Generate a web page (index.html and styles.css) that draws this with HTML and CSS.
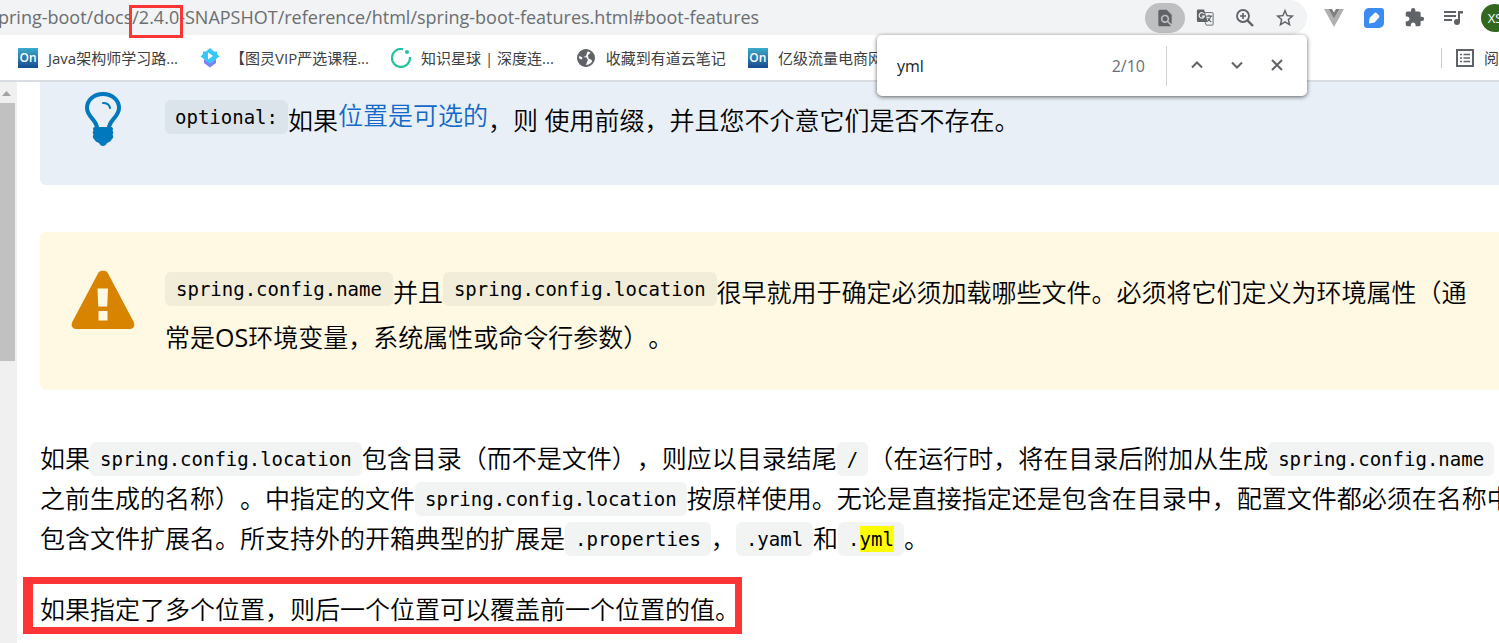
FILE: index.html
```
<!DOCTYPE html>
<html lang="zh-CN">
<head>
<meta charset="utf-8">
<title>Spring Boot Features</title>
<link rel="stylesheet" href="styles.css">
</head>
<body>
<header class="toolbar">
  <div class="omnibox">
    <input class="url" type="text" aria-label="地址" value="pring-boot/docs/2.4.0-SNAPSHOT/reference/html/spring-boot-features.html#boot-features">
    <button class="tool tool-active" aria-label="查找"><svg width="20" height="20" viewBox="0 0 24 24"><path fill="#5f6368" d="M20 19.6V8l-6-6H6c-1.100 0-2 .9-2 2v16c0 1.100.9 2 2 2h12c.45 0 .85-.15 1.200-.4l-4.430-4.430A4.970 4.970 0 0 1 7 13a5 5 0 1 1 9.170 2.750L20 19.600zM9 13a3 3 0 1 0 6 0 3 3 0 0 0-6 0z"/></svg></button>
    <button class="tool" aria-label="翻译"><svg width="18" height="19" viewBox="0 0 20 20"><path fill="#5f6368" d="M2 1h7l4 14H2.500A1.500 1.500 0 0 1 1 13.500V2.500A1.500 1.500 0 0 1 2 1z"/><path fill="none" stroke="#5f6368" stroke-width="1" d="M10 4.500h8a1 1 0 0 1 1 1v12a1 1 0 0 1-1 1h-6.500L10 15"/><path fill="none" stroke="#f1f3f4" stroke-width="1.300" d="M9 6a3 3 0 1 0 .4 2.500H6.500"/><path fill="none" stroke="#5f6368" stroke-width="1.200" d="M11.500 8.500H18M14.500 7v1.500M16.500 8.500c-.5 3-2 4.500-4 6M13 10.500c1 2 2.500 3.500 4 4.500"/></svg></button>
    <button class="tool" aria-label="缩放"><svg width="20" height="20" viewBox="0 0 20 20"><g fill="none" stroke="#5f6368"><circle cx="8" cy="8" r="6" stroke-width="1.800"/><path stroke-width="2.400" d="M12.400 12.400l5.600 5.600"/><path stroke-width="1.600" d="M5 8h6M8 5v6"/></g></svg></button>
    <button class="tool" aria-label="收藏"><svg width="22" height="22" viewBox="0 0 24 24"><path fill="#5f6368" d="M22 9.240l-7.190-.62L12 2 9.190 8.630 2 9.240l5.460 4.730L5.820 21 12 17.270 18.180 21l-1.630-7.030L22 9.240zM12 15.400l-3.760 2.270 1-4.280-3.320-2.880 4.380-.38L12 6.100l1.710 4.040 4.380.38-3.320 2.880 1 4.280L12 15.400z"/></svg></button>
  </div>
  <div class="extensions">
    <button class="tool" aria-label="Vue"><svg width="20" height="18" viewBox="0 0 20 18"><path fill="#b0b0b0" d="M0 0h4.500L10 9.500 15.500 0H20L10 18z"/><path fill="#7d7d7d" d="M4.500 0H8l2 3.500L12 0h3.500L10 9.500z"/></svg></button>
    <button class="tool" aria-label="笔记"><svg width="20" height="20" viewBox="0 0 20 20"><path fill="#3b8cf2" d="M5 0h12a3 3 0 0 1 3 3v12a5 5 0 0 1-5 5H3a3 3 0 0 1-3-3V5a5 5 0 0 1 5-5z"/><path fill="#fff" d="M5 15.500L5.500 10l5-5a1.500 1.500 0 0 1 2 0l2.500 2.500a1.500 1.500 0 0 1 0 2L10.500 14.500z"/></svg></button>
    <button class="tool" aria-label="扩展程序"><svg width="21" height="21" viewBox="0 0 24 24"><path fill="#5f6368" d="M20.500 11H19V7c0-1.100-.9-2-2-2h-4V3.500a2.500 2.500 0 0 0-5 0V5H4c-1.100 0-1.990.9-1.990 2v3.800H3.500c1.490 0 2.700 1.210 2.700 2.700s-1.210 2.700-2.700 2.700H2V20c0 1.100.9 2 2 2h3.800v-1.500c0-1.490 1.210-2.700 2.700-2.700s2.700 1.210 2.700 2.700V22H17c1.100 0 2-.9 2-2v-4h1.500a2.500 2.500 0 0 0 0-5z"/></svg></button>
    <button class="tool" aria-label="媒体"><svg width="20" height="18" viewBox="0 0 20 18"><path fill="none" stroke="#5f6368" stroke-width="2" d="M0 3h12M0 7h12M0 11h8"/><circle cx="13" cy="13" r="3" fill="#5f6368"/><path fill="#5f6368" d="M14 2h5v2.500h-3V13h-2z"/></svg></button>
    <button class="avatar">XS</button>
  </div>
</header>
<nav class="bookmarks">
  <a class="bookmark" href="#"><span class="on-icon">On</span>Java架构师学习路...</a>
  <a class="bookmark" href="#"><svg width="20" height="20" viewBox="0 0 20 20"><path fill="#7b82f5" d="M4 11l6 4 6-4v4l-6 4.500L4 15z"/><path fill="#35c6fb" d="M10 0l4 3.500h3V6l2.500 2.500L16 11l-6 4.500L4 11 .5 8.500 3 6V3.500h3z"/><path fill="#fff" d="M8 4.500l5 3.500-5 3.500z"/></svg>【图灵VIP严选课程...</a>
  <a class="bookmark" href="#"><svg width="20" height="20" viewBox="0 0 20 20"><path fill="none" stroke="#1fc3a0" stroke-width="2.200" d="M12 1.200A9 9 0 1 0 18.900 9"/><circle cx="16" cy="4" r="2" fill="#1fc3a0"/></svg>知识星球 | 深度连...</a>
  <a class="bookmark" href="#"><svg width="20" height="20" viewBox="0 0 20 20"><circle cx="10" cy="10" r="8" fill="#fff" stroke="#5f6368" stroke-width="2"/><path fill="#5f6368" d="M10 1.500l2.500.5-1.500 3-1 3-2.500 1 3 .5 1.500 2.500-1 2-1.500 4.500C5 18 1.500 15 1.500 10L3 10.500l3 1 .5-2-2-1L2.500 7C4 3 7 1.500 10 1.500zM12 7l3-2.500 3 3.500-1 6-2-2.500-2.500-1z"/></svg>收藏到有道云笔记</a>
  <a class="bookmark" href="#"><span class="on-icon">On</span>亿级流量电商网</a>
  <a class="reading" href="#"><svg width="18" height="18" viewBox="0 0 18 18"><path fill="none" stroke="#5f6368" stroke-width="2" d="M1 1h16v16H1z"/><path fill="none" stroke="#5f6368" stroke-width="1.600" d="M4 5.500h2M4 9h2M4 12.500h2M7.500 5.500H14M7.500 9H14M7.500 12.500H14"/></svg>阅</a>
</nav>
<form class="findbar">
  <input class="find-input" type="text" aria-label="在网页中查找" value="yml">
  <span class="find-count">2/10</span>
  <button class="find-button" type="button" aria-label="上一个"><svg width="12" height="12" viewBox="0 0 12 12"><path d="M1 8.500l5-5 5 5"/></svg></button>
  <button class="find-button" type="button" aria-label="下一个"><svg width="12" height="12" viewBox="0 0 12 12"><path d="M1 3.500l5 5 5-5"/></svg></button>
  <button class="find-button" type="button" aria-label="关闭"><svg width="12" height="12" viewBox="0 0 12 12"><path d="M1 1l10 10M11 1L1 11"/></svg></button>
</form>
<div class="viewport">
  <div class="scrollbar"><svg class="scroll-up" width="9" height="5" viewBox="0 0 9 5"><path fill="#a3a3a3" d="M0 5L4.500 0 9 5z"/></svg><div class="thumb"></div></div>
  <main class="doc">
    <section class="note tip">
      <div class="note-icon"><svg width="36" height="54" viewBox="0 0 36 54"><path fill="none" stroke="#0078bd" stroke-width="4" d="M12 36c0-8-10-11-10-20C2 8 9 2 18 2s16 6 16 14c0 9-10 12-10 20"/><path fill="none" stroke="#0078bd" stroke-width="2" stroke-linecap="round" d="M18 11c4 0 6.500 2 7 5"/><path fill="#0078bd" d="M10 35h16c2 0 2.500 2 1.500 3.500 1 1.500 1 2.500 0 4 1 1.500 1 3-.5 4.500-1 2-2.500 3-5 4-1 2-2 3-4 3s-3-1-4-3c-2.500-1-4-2-5-4-1.500-1.500-1.500-3-.5-4.500-1-1.500-1-2.500 0-4C7.500 37 8 35 10 35z"/></svg></div>
      <p class="note-text"><code>optional:</code>如果<a href="#">位置是可选的</a>，则 使用前缀，并且您不介意它们是否不存在。</p>
    </section>
    <section class="note warning">
      <div class="note-icon"><svg width="64" height="60" viewBox="0 0 64 60"><path fill="#d88400" d="M27.500 2.500C29 0 35 0 36.500 2.500l26 49c2 4 .5 7.500-4 7.500h-53c-4.500 0-6-3.500-4-7.500z"/><path fill="#fff8e3" d="M26.500 18.500h10.500l-.8 18h-9zM27.500 41h9v9.500h-9z"/></svg></div>
      <p class="note-text"><code>spring.config.name</code>并且<code>spring.config.location</code>很早就用于确定必须加载哪些文件。必须将它们定义为环境属性（通常是<span class="latin">OS</span>环境变量，系统属性或命令行参数）。</p>
    </section>
    <p class="para">如果<code>spring.config.location</code>包含目录（而不是文件），则应以目录结尾<code>/</code>（在运行时，将在目录后附加从生成<code>spring.config.name</code>之前生成的名称）。中指定的文件<code>spring.config.location</code>按原样使用。无论是直接指定还是包含在目录中，配置文件都必须在名称中包含文件扩展名。所支持外的开箱典型的扩展是<code>.properties</code>，<code>.yaml</code>和<code>.<mark>yml</mark></code>。</p>
    <p class="para marked">如果指定了多个位置，则后一个位置可以覆盖前一个位置的值。</p>
  </main>
</div>
<div class="version-frame"></div>
</body>
</html>
```
FILE: styles.css
```
* { box-sizing: border-box; }

body {
  margin: 0;
  height: 100vh;
  display: flex;
  flex-direction: column;
  overflow: hidden;
  position: relative;
  background: #fff;
  color: #000;
  font-family: "Open Sans", "Noto Sans CJK SC", sans-serif;
  text-spacing-trim: space-all;
}

button {
  border: 0;
  padding: 0;
  background: none;
  font-family: inherit;
}

input {
  border: 0;
  outline: 0;
  padding: 0;
  background: none;
  font-family: inherit;
}

a { text-decoration: none; }

.toolbar {
  display: flex;
  height: 35px;
  flex: none;
}

.omnibox {
  flex: 1;
  min-width: 0;
  display: flex;
  align-items: center;
  background: #f1f3f4;
  border-radius: 0 18px 18px 0;
  padding-right: 2px;
}

.url {
  flex: 1;
  min-width: 0;
  height: 35px;
  padding-bottom: 2px;
  text-indent: -2px;
  font-size: 18px;
  color: #6b6e72;
}

.tool {
  flex: none;
  width: 40px;
  height: 30px;
  display: flex;
  align-items: center;
  justify-content: center;
}

.tool-active {
  background: #bdbfc1;
  border-radius: 15px;
}

.extensions {
  width: 192px;
  flex: none;
  display: flex;
  align-items: center;
  padding-left: 7px;
  overflow: hidden;
}

.avatar {
  flex: none;
  width: 28px;
  height: 28px;
  margin-left: 7px;
  border-radius: 50%;
  background: #33691e;
  color: #fff;
  font-size: 13px;
}

.bookmarks {
  flex: none;
  height: 47px;
  display: flex;
  align-items: center;
  gap: 22px;
  padding-left: 18px;
  border-bottom: 2px solid #d9dce0;
  overflow: hidden;
  white-space: nowrap;
}

.bookmark, .reading {
  display: flex;
  flex: none;
  align-items: center;
  gap: 10px;
  font-size: 15px;
  color: #3c4043;
}

.reading {
  width: 58px;
  height: 20px;
  margin-left: auto;
  padding-left: 14px;
  border-left: 1px solid #c8cacd;
  overflow: hidden;
}

.reading svg { flex: none; }

.on-icon {
  width: 20px;
  height: 20px;
  background: linear-gradient(#3cabc9, #174a91);
  color: #fff;
  font-size: 12px;
  font-weight: 600;
  line-height: 20px;
  text-align: center;
}

.findbar {
  position: absolute;
  top: 35px;
  right: 192px;
  width: 430px;
  height: 61px;
  display: flex;
  align-items: center;
  padding: 0 10px 0 20px;
  background: #fff;
  border-radius: 5px;
  box-shadow: 0 1px 4px rgba(0, 0, 0, 0.6);
  font-size: 16px;
}

.find-input {
  flex: 1;
  min-width: 0;
  font-size: 16px;
  color: #202124;
}

.find-count {
  height: 40px;
  line-height: 40px;
  padding-right: 21px;
  margin-right: 10px;
  border-right: 1px solid #d0d2d5;
  color: #6b6e72;
}

.find-button {
  width: 40px;
  height: 40px;
}

.find-button path {
  fill: none;
  stroke: #5f6368;
  stroke-width: 2;
}

.viewport {
  flex: 1;
  min-height: 0;
  display: flex;
  overflow: hidden;
}

.scrollbar {
  width: 17px;
  flex: none;
  background: #f0f0f0;
  padding-right: 2px;
}

.scroll-up {
  display: block;
  margin: 9px 0 7px 2px;
}

.thumb {
  height: 46%;
  background: #c1c1c1;
}

.doc {
  flex: 1;
  min-width: 0;
  margin-right: -18px;
  padding-left: 23px;
  font-size: 25px;
  font-weight: 350;
  line-height: 40px;
}

.latin { font-weight: 400; }

.note {
  display: flex;
  align-items: flex-start;
  padding-right: 35px;
}

.tip {
  padding-top: 10px;
  padding-bottom: 39px;
  background: #e8eff6;
  border-radius: 0 0 6px 6px;
}

.tip .note-text { padding-top: 6px; }

.warning {
  margin-top: 47px;
  padding-top: 38px;
  padding-bottom: 30px;
  background: #fff8e3;
  border-radius: 6px;
}

.warning code { padding: 6px 11px; }

.note-icon {
  width: 125px;
  flex: none;
  display: flex;
  justify-content: center;
}

.note-text {
  margin: 0;
  line-height: 45px;
}

.note-text a {
  color: #1169c9;
  vertical-align: 5px;
  line-height: 1;
}

code {
  font-family: "DejaVu Sans Mono", monospace;
  font-size: 19px;
  font-weight: 400;
  line-height: 1;
  vertical-align: 2px;
  padding: 6px 10px;
  border-radius: 6px;
  background: rgba(27, 60, 50, 0.055);
}

.note-text code { vertical-align: 6px; }

mark {
  background: #ff0;
  color: inherit;
  padding: 2px 0;
}

.para { margin: 48px 0 0; }

.marked {
  margin: 19px 0 0 -17px;
  width: 719px;
  padding: 7px 0 0 7px;
  border: 7px solid #fc3636;
  border-left-width: 10px;
  line-height: 36px;
  white-space: nowrap;
}

.version-frame {
  position: absolute;
  left: 129px;
  top: 5px;
  width: 54px;
  height: 33px;
  border: 3px solid #fc3636;
}
```
